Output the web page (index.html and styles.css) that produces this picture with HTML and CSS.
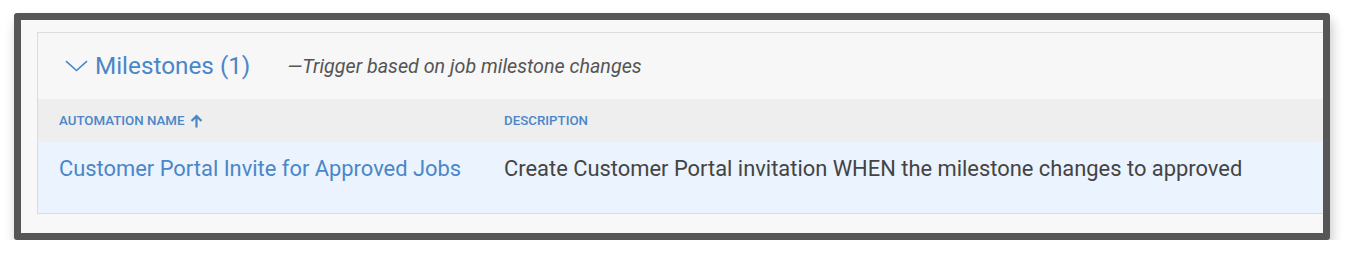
FILE: index.html
```html
<!DOCTYPE html>
<html>
<head>
<meta charset="utf-8">
<link rel="stylesheet" href="styles.css">
</head>
<body>
<div class="frame">
  <div class="panel">
    <div class="group-head">
      <svg class="chev" width="23" height="12" viewBox="0 0 23 12"><path d="M1 1.2 L11.5 10.5 L22 1.2" fill="none" stroke="#4a86c8" stroke-width="1.6"/></svg>
      <span class="group-title">Milestones (1)</span>
      <span class="group-sub">—Trigger based on job milestone changes</span>
    </div>
    <div class="thead">
      <div class="col col-name">AUTOMATION NAME
        <svg class="sort" width="13" height="14" viewBox="0 0 13 14"><path d="M6.5 13.5 V2 M1.5 7 L6.5 2 L11.5 7" fill="none" stroke="#4a86c8" stroke-width="2.2"/></svg>
      </div>
      <div class="col col-desc">DESCRIPTION</div>
    </div>
    <div class="row">
      <div class="col col-name name-link">Customer Portal Invite for Approved Jobs</div>
      <div class="col col-desc desc-text">Create Customer Portal invitation WHEN the milestone changes to approved</div>
    </div>
  </div>
</div>
</body>
</html>
```
FILE: styles.css
```css
html, body {
  margin: 0;
  padding: 0;
  background: #ffffff;
}
body {
  font-family: Roboto, "Liberation Sans", sans-serif;
  padding: 13px 0 0 14px;
}
.frame {
  width: 1286px;
  height: 201px;
  border: 7px solid #565656;
  border-radius: 3px;
  background: #f8f8f8;
  box-shadow: 2px 7px 12px rgba(0,0,0,0.22);
  overflow: hidden;
  padding: 12px 0 0 16px;
}
.panel {
  width: 1320px;
  border: 1px solid #dcdcdc;
  border-right: none;
  background: #f7f7f7;
}
.group-head {
  height: 66px;
  display: flex;
  align-items: center;
  padding-left: 27px;
}
.chev {
  margin-top: 0;
  margin-right: 7px;
}
.group-title {
  font-size: 24.3px;
  color: #4a86c8;
  margin-right: 37px;
  margin-top: -1px;
}
.group-sub {
  font-size: 19.7px;
  font-style: italic;
  color: #555;
}
.thead {
  height: 43px;
  background: #eeeeee;
  display: flex;
  align-items: center;
}
.row {
  height: 71px;
  background: #eaf3fe;
  display: flex;
  align-items: flex-start;
  padding-top: 14px;
  box-sizing: border-box;
}
.col-name {
  width: 445px;
  padding-left: 21px;
  display: flex;
  align-items: center;
}
.col-desc {
  flex: 1;
}
.thead .col {
  font-size: 13.3px;
  font-weight: 500;
  color: #4a86c8;
}
.sort {
  margin-left: 5px;
}
.name-link {
  font-size: 21.9px;
  color: #4a86c8;
}
.desc-text {
  font-size: 21.9px;
  color: #444;
}
```
